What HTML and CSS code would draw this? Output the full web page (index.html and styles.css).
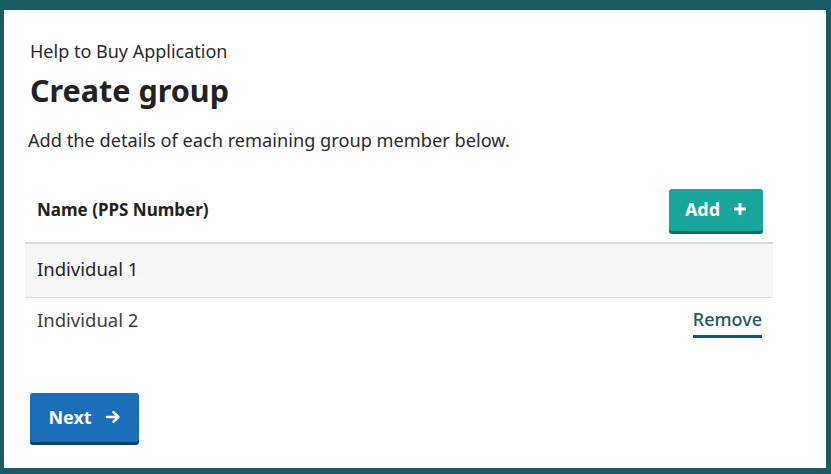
FILE: index.html
```html
<!DOCTYPE html>
<html lang="en">
<head>
<meta charset="utf-8">
<title>Create group</title>
<link rel="stylesheet" href="styles.css">
</head>
<body>
<main class="panel">
  <p class="caption">Help to Buy Application</p>
  <h1 class="title">Create group</h1>
  <p class="lead">Add the details of each remaining group member below.</p>
  <table class="members">
    <thead>
      <tr>
        <th class="col-name">Name (PPS Number)</th>
        <th class="col-action">
          <button class="btn btn-add" type="button">Add
            <svg class="plus" viewBox="0 0 14 14" width="14" height="14" aria-hidden="true"><path d="M7 1v12M1 7h12" fill="none" stroke="#fff" stroke-width="3"/></svg>
          </button>
        </th>
      </tr>
    </thead>
    <tbody>
      <tr class="row-alt">
        <td class="col-name">Individual 1</td>
        <td class="col-action"></td>
      </tr>
      <tr class="row-last">
        <td class="col-name muted">Individual 2</td>
        <td class="col-action"><a class="link-remove" href="#">Remove</a></td>
      </tr>
    </tbody>
  </table>
  <button class="btn btn-next" type="button">Next
    <svg class="arrow" viewBox="0 0 16 16" width="16" height="16" aria-hidden="true"><path d="M2 8h11M8.5 3.2 13.3 8l-4.8 4.8" fill="none" stroke="#fff" stroke-width="2.6" stroke-linecap="round" stroke-linejoin="round"/></svg>
  </button>
</main>
</body>
</html>
```
FILE: styles.css
```css
* { box-sizing: border-box; }
html, body { margin: 0; height: 100%; }
body {
  background: #1a5c63;
  padding: 10px 5px 6px 4px;
  font-family: "Noto Sans", "Open Sans", sans-serif;
  color: #1f1f1f;
}
.panel {
  background: #fff;
  height: 458px;
  padding: 28px 53px 0 21px;
  display: flex;
  flex-direction: column;
  align-items: flex-start;
}
.caption {
  margin: 0 0 0 5px;
  font-size: 18px;
  line-height: 26px;
  color: #2a2a2a;
}
.title {
  margin: 6px 0 0 5px;
  font-size: 30.5px;
  line-height: 40px;
  font-weight: 700;
  color: #222;
}
.lead {
  margin: 17px 0 0 3px;
  font-size: 18.2px;
  line-height: 26px;
  color: #2a2a2a;
}
.members {
  margin-top: 30px;
  width: 748px;
  border-collapse: collapse;
  font-size: 18px;
}
.members th, .members td { padding: 0 11px 0 12px; }
.members thead tr { height: 60px; border-bottom: 2px solid #dcdcdc; }
.members th { text-align: left; font-weight: 700; font-size: 17px; vertical-align: middle; padding-bottom: 6px; color: #222; }
.members th.col-action { text-align: right; padding-right: 10px; }
.members tbody tr.row-alt { height: 54px; background: #f7f7f7; border-bottom: 1px solid #dcdcdc; }
.members tbody tr.row-alt td { padding-bottom: 4px; }
.members tbody tr.row-last { height: 44px; }
.members td.col-action { text-align: right; }
.members td.col-name { font-size: 18.5px; }
.muted { color: #3d3d3d; }
.btn {
  border: 0;
  border-radius: 3px;
  color: #fff;
  font-family: inherit;
  font-weight: 700;
  font-size: 18px;
  cursor: pointer;
  display: inline-flex;
  align-items: center;
  justify-content: center;
  gap: 13px;
}
.btn-add {
  background: #17a59c;
  box-shadow: 0 3px 0 #0e6f69;
  width: 94px;
  height: 42px;
  padding-bottom: 2px;
}
.plus { display: block; }
.link-remove {
  display: inline-block;
  color: #22546c;
  text-decoration: none;
  border-bottom: 3px solid #22546c;
  padding-bottom: 4px;
  margin-top: 6px;
  font-size: 18px;
  font-weight: 500;
}
.btn-next {
  margin: 52px 0 0 5px;
  background: #1b6fba;
  box-shadow: 0 3px 0 #0d3f6e;
  width: 109px;
  height: 49px;
  padding-bottom: 2px;
}
.arrow { display: block; }
```
